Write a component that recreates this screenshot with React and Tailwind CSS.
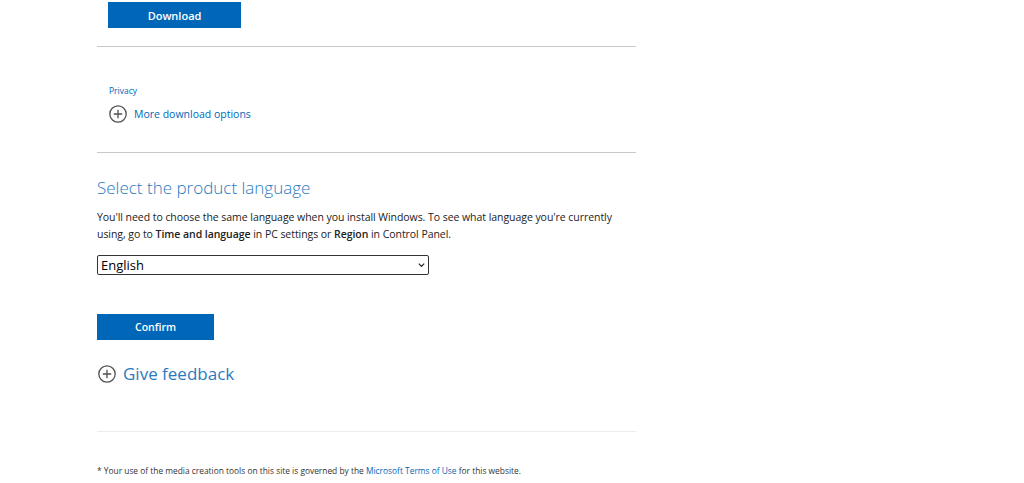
import React, { useState } from "react";

const PlusCircle = ({ className }) => (
  <svg viewBox="0 0 18 18" className={className} fill="none" stroke="currentColor">
    <circle cx="9" cy="9" r="8.2" strokeWidth="1.3" />
    <path d="M9 4.8v8.4M4.8 9h8.4" strokeWidth="1.3" />
  </svg>
);

const App = () => {
  const [language, setLanguage] = useState("English");

  return (
    <div
      className="min-h-screen bg-white"
      style={{ fontFamily: '"Open Sans", "Noto Sans", Arial, sans-serif' }}
    >
      <div className="ml-[97px] w-[539px] pt-[2px]">
        <button className="ml-[11px] flex h-[26px] w-[133px] items-center justify-center bg-[#0067b8] pt-[2px] text-[11px] font-semibold text-white">
          Download
        </button>

        <div className="mt-[18px] border-t border-[#c8c8c8]" />

        <a href="#" className="mt-[38px] ml-[12px] block text-[8.5px] leading-[12px] text-[#0067b8]">
          Privacy
        </a>
        <div className="mt-[8px] ml-[12px] flex h-[18px] items-center gap-[7px]">
          <PlusCircle className="h-[18px] w-[18px] text-[#505050]" />
          <a href="#" className="text-[10.5px] leading-[18px] text-[#0067b8]">
            More download options
          </a>
        </div>

        <div className="mt-[29px] border-t border-[#c8c8c8]" />

        <h2 className="mt-[23px] text-[17px] font-light leading-[24px] text-[#2a7ac0]">
          Select the product language
        </h2>
        <p className="mt-[9px] whitespace-nowrap text-[10.5px] leading-[17px] tracking-[-0.05px] text-[#222]">
          You'll need to choose the same language when you install Windows. To see what language you're currently
          <br />
          using, go to <b className="font-semibold">Time and language</b> in PC settings or{" "}
          <b className="font-semibold">Region</b> in Control Panel.
        </p>

        <div className="relative mt-[12px] flex h-[20px] w-[332px]">
          <select
            value={language}
            onChange={(e) => setLanguage(e.target.value)}
            className="block h-[20px] w-full appearance-none rounded-[2px] border border-[#333] bg-white pl-[3px] text-[13px] leading-[18px] text-black outline-none"
          >
            <option>English</option>
            <option>English International</option>
            <option>French</option>
            <option>German</option>
          </select>
          <span className="pointer-events-none absolute inset-y-0 right-[4px] flex items-center">
            <svg viewBox="0 0 10 6" className="block h-[4px] w-[7px]" fill="none" stroke="#222" strokeWidth="1.8">
              <path d="M1 1l4 4 4-4" />
            </svg>
          </span>
        </div>

        <button className="mt-[39px] flex h-[26px] w-[117px] items-center justify-center bg-[#0067b8] pt-[2px] text-[10.5px] font-semibold text-white">
          Confirm
        </button>

        <div className="mt-[22px] ml-[1px] flex h-[24px] items-center gap-[7px]">
          <PlusCircle className="h-[18px] w-[18px] text-[#505050]" />
          <a href="#" className="text-[17px] leading-[24px] text-[#2a7ac0]">
            Give feedback
          </a>
        </div>

        <div className="mt-[45px] border-t border-[#ececec]" />

        <p className="mt-[33px] whitespace-nowrap text-[8.4px] leading-[11px] text-[#333]">
          * Your use of the media creation tools on this site is governed by the{" "}
          <a href="#" className="text-[#0067b8]">
            Microsoft Terms of Use
          </a>{" "}
          for this website.
        </p>
      </div>
    </div>
  );
};

export default App;
